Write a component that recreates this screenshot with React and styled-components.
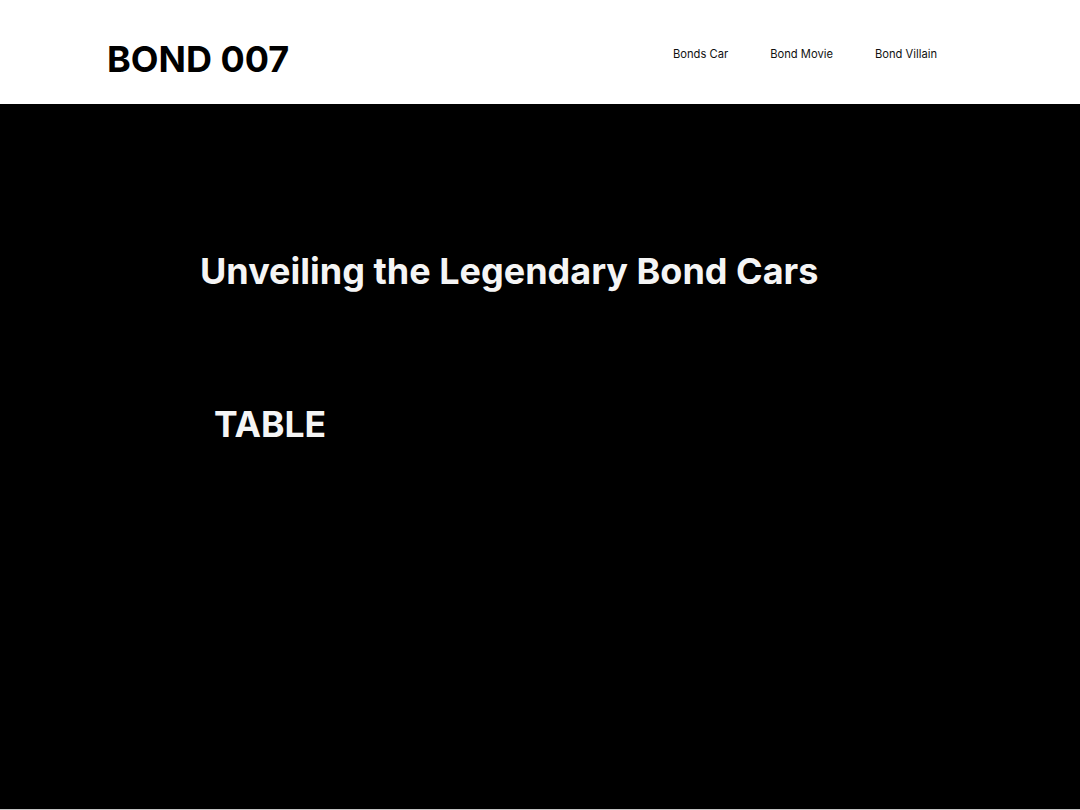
import styled, { createGlobalStyle } from "styled-components";

const GlobalStyle = createGlobalStyle`
  html, body {
    margin: 0;
    padding: 0;
    background: #ffffff;
    font-family: Inter, "Noto Sans", sans-serif;
  }
`;

const links = ["Bonds Car", "Bond Movie", "Bond Villain"];

export default function App() {
  return (
    <>
      <GlobalStyle />
      <StyledHeader>
        <StyledLogo>BOND 007</StyledLogo>
        <StyledNav>
          {links.map((link) => (
            <StyledNavLink key={link} href="#">{link}</StyledNavLink>
          ))}
        </StyledNav>
      </StyledHeader>
      <StyledMain>
        <StyledTitle>Unveiling the Legendary Bond Cars</StyledTitle>
        <StyledTableLabel>TABLE</StyledTableLabel>
      </StyledMain>
    </>
  );
}

const StyledHeader = styled.header`
  display: flex;
  align-items: center;
  justify-content: space-between;
  height: 104px;
  padding: 0 143px 0 107px;
  box-sizing: border-box;
`;

const StyledLogo = styled.h1`
  margin: 0;
  font-size: 36px;
  font-weight: 700;
  color: #000;
  transform: translateY(7px);
`;

const StyledNav = styled.nav`
  display: flex;
  gap: 42px;
  padding-top: 3px;
`;

const StyledNavLink = styled.a`
  font-size: 11.2px;
  color: #111;
  text-decoration: none;
`;

const StyledMain = styled.main`
  display: flex;
  flex-direction: column;
  align-items: flex-start;
  background: #000;
  height: 706px;
  padding: 145px 0 0 200px;
  box-sizing: border-box;
  border-bottom: 1px solid #c6c6c6;
`;

const StyledTitle = styled.h2`
  margin: 0;
  font-size: 36px;
  font-weight: 700;
  color: #f5f5f5;
`;

const StyledTableLabel = styled.h3`
  margin: 110px 0 0 14px;
  font-size: 35.5px;
  font-weight: 700;
  color: #f5f5f5;
`;
